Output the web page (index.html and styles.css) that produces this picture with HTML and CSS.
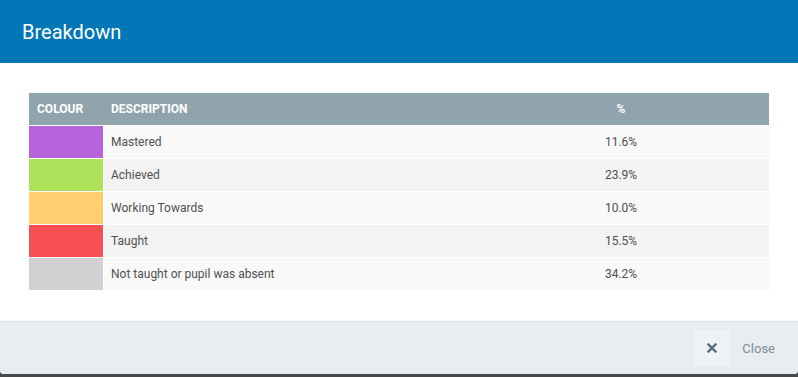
FILE: index.html
```html
<!DOCTYPE html>
<html>
<head>
    <title>Breakdown</title>
    <link rel="stylesheet" href="styles.css">
</head>
<body>
    <div class="modal">
        <div class="modal-header">
            <h1>Breakdown</h1>
        </div>
        <div class="modal-body">
            <table class="breakdown">
                <colgroup>
                    <col class="col-colour">
                    <col class="col-desc">
                    <col class="col-pct">
                </colgroup>
                <thead>
                    <tr>
                        <th class="first">Colour</th>
                        <th>Description</th>
                        <th class="pct">%</th>
                    </tr>
                </thead>
                <tbody>
                    <tr>
                        <td class="swatch mastered"></td>
                        <td>Mastered</td>
                        <td class="pct">11.6%</td>
                    </tr>
                    <tr>
                        <td class="swatch achieved"></td>
                        <td>Achieved</td>
                        <td class="pct">23.9%</td>
                    </tr>
                    <tr>
                        <td class="swatch working"></td>
                        <td>Working Towards</td>
                        <td class="pct">10.0%</td>
                    </tr>
                    <tr>
                        <td class="swatch taught"></td>
                        <td>Taught</td>
                        <td class="pct">15.5%</td>
                    </tr>
                    <tr>
                        <td class="swatch absent"></td>
                        <td>Not taught or pupil was absent</td>
                        <td class="pct">34.2%</td>
                    </tr>
                </tbody>
            </table>
        </div>
        <div class="modal-footer">
            <button class="close-btn">
                <span class="close-icon">
                    <svg width="10" height="10" viewBox="0 0 10 10">
                        <path d="M1.5 1.5 L8.5 8.5 M8.5 1.5 L1.5 8.5" stroke="#546e7a" stroke-width="2.4" stroke-linecap="square"/>
                    </svg>
                </span>
                <span class="close-label">Close</span>
            </button>
        </div>
    </div>
</body>
</html>
```

FILE: styles.css
```css
body {
    margin: 0;
    background-color: #4a4a4a;
    font-family: Roboto, "Liberation Sans", sans-serif;
}
.modal {
    width: 798px;
    height: 374px;
    background-color: #fff;
    border-radius: 0 0 4px 4px;
    overflow: hidden;
    display: flex;
    flex-direction: column;
}
.modal-header {
    background-color: #0277b7;
    height: 63px;
    box-sizing: border-box;
    padding: 0 22px;
    display: flex;
    align-items: center;
}
.modal-header h1 {
    margin: 0;
    color: #fff;
    font-size: 20px;
    font-weight: 400;
}
.modal-body {
    padding: 30px 29px;
    flex: 1;
}
.breakdown {
    width: 100%;
    table-layout: fixed;
    border-collapse: separate;
    border-spacing: 0;
    font-size: 12px;
    color: #505050;
}
.col-colour {
    width: 75px;
}
.col-pct {
    width: 296px;
}
.breakdown th {
    background-color: #90a4ae;
    color: #fff;
    font-weight: 700;
    text-transform: uppercase;
    text-align: left;
    height: 32px;
    padding: 0 7px;
    font-size: 12px;
}
.breakdown th.first {
    padding-left: 8px;
}
.breakdown td {
    height: 32px;
    padding: 0 7px;
    border-top: 1px solid #fff;
}
.breakdown tbody tr:nth-child(odd) td {
    background-color: #f9f9f9;
}
.breakdown tbody tr:nth-child(even) td {
    background-color: #f3f3f3;
}
.breakdown .pct {
    text-align: center;
}
.breakdown td.swatch {
    border-right: 1px solid #fff;
}
.breakdown tbody tr td.mastered {
    background-color: #b763db;
}
.breakdown tbody tr td.achieved {
    background-color: #aee25b;
}
.breakdown tbody tr td.working {
    background-color: #fecf6f;
}
.breakdown tbody tr td.taught {
    background-color: #f65052;
}
.breakdown tbody tr td.absent {
    background-color: #d1d1d1;
}
.modal-footer {
    border-top: 1px solid #dadee2;
    background-color: #e9edf0;
    height: 53px;
    box-sizing: border-box;
    padding: 0 23px;
    display: flex;
    justify-content: flex-end;
    align-items: center;
}
.close-btn {
    display: flex;
    align-items: center;
    gap: 12px;
    border: none;
    background: none;
    padding: 0;
    cursor: pointer;
    font-family: inherit;
}
.close-icon {
    width: 36px;
    height: 36px;
    background-color: #eff2f4;
    border-radius: 2px;
    display: flex;
    align-items: center;
    justify-content: center;
}
.close-label {
    font-size: 13px;
    color: #78909c;
}
```
